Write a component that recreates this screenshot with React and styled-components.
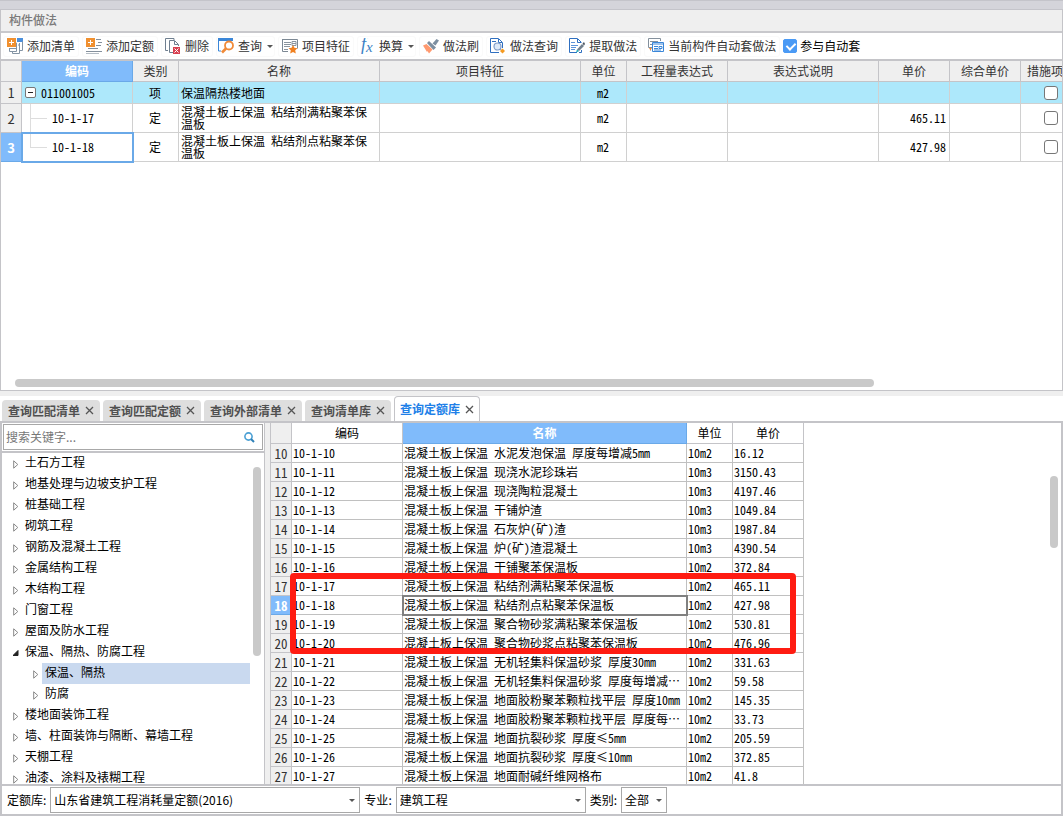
import { useState } from "react";
import styled, { createGlobalStyle, css } from "styled-components";

const GlobalStyle = createGlobalStyle`
  * {
    box-sizing: border-box;
  }

  body {
    margin: 0;
    font-family: "Noto Sans CJK SC", sans-serif;
    font-size: 12px;
    line-height: 16px;
    color: #333;
    background: #fff;
  }

  button,
  input,
  select {
    font: inherit;
    color: inherit;
    margin: 0;
  }
`;

const songti = css`
  font-family: "Noto Sans CJK SC", sans-serif;
  font-feature-settings: "hwid";
  color: #000;
`;

const Page = styled.div`
  display: flex;
  flex-direction: column;
  height: 100vh;
  overflow: hidden;
`;

const Upper = styled.section`
  display: flex;
  flex-direction: column;
  flex: none;
  height: calc(50vh - 27px);
  border: 1px solid #c4c4c8;
  border-top: 0;
`;

const Strip = styled.div`
  flex: none;
  height: 10px;
  background: #d4d4da;
  border: 1px solid #c4c4ca;
  border-width: 1px 0;
`;

const Title = styled.h1`
  flex: none;
  height: 23px;
  margin: 0;
  padding: 2px 8px;
  font-size: 12px;
  line-height: 16px;
  font-weight: 500;
  color: #7a7a7a;
  background: #efefef;
  border-bottom: 2px solid #c8c8cc;
`;

const Toolbar = styled.div`
  display: flex;
  align-items: center;
  flex: none;
  gap: 3px;
  height: 28px;
  padding: 0 2px;
  border-bottom: 2px solid #c4c4c8;
  white-space: nowrap;
`;

const ToolButton = styled.button`
  display: flex;
  align-items: center;
  gap: 4px;
  height: 21px;
  padding: 0 ${(p) => (p.$menu ? 1 : 3)}px;
  border: 1px solid #fafafa;
  border-radius: 3px;
  background: #fff;

  svg {
    flex: none;
  }
`;

const Caret = styled.span`
  width: 5px;
  margin-left: 1px;
  border: solid transparent;
  border-width: 3px 3px 0;
  border-top-color: #555;
`;

const CheckLabel = styled.label`
  display: flex;
  align-items: center;
  gap: 3px;
  color: #000;
`;

const Check = styled.input`
  appearance: none;
  display: block;
  width: 14px;
  height: 14px;
  border: 1px solid #777;
  border-radius: 3px;
  background: #fff;

  &:checked {
    border-color: #4a9af5;
    border-radius: 2px;
    background: #4a9af5;
  }

  &:checked::after {
    content: "";
    display: block;
    width: 4px;
    height: 7px;
    margin: 1px 4px;
    border: solid #fff;
    border-width: 0 2px 2px 0;
    transform: rotate(45deg);
  }
`;

const TopGrid = styled.div`
  flex: 1;
  min-height: 0;
  overflow: hidden;
`;

const Table = styled.table`
  table-layout: fixed;
  width: ${(p) => p.$width}px;
  border-collapse: separate;
  border-spacing: 0;
`;

const Th = styled.th`
  height: 21px;
  padding: 0;
  font-weight: 400;
  background: #efefef;
  border: solid #c4c4c8;
  border-width: 0 1px 1px 0;

  ${(p) =>
    p.$plain &&
    css`
      ${songti}
      background: #fff;
    `}

  ${(p) =>
    p.$active &&
    css`
      font-weight: 700;
      color: #fff;
      background: #80bbfb;
      border-color: #6aa9e8;
    `}
`;

const Td = styled.td`
  ${songti}
  height: ${(p) => p.$height}px;
  padding: 0 3px 0 2px;
  line-height: 12px;
  text-align: ${(p) => p.$align || "left"};
  background: ${(p) => (p.$highlight ? "#ade8fb" : "#fff")};
  border: solid #d0d0d0;
  border-width: 0 1px 1px 0;

  ${(p) =>
    p.$selected &&
    css`
      outline: 2px solid #6aa9e8;
      outline-offset: -1px;
    `}
`;

const NameText = styled.div`
  padding-right: 8px;
`;

const RowHead = styled.th`
  height: ${(p) => p.$height}px;
  padding: 1px 0 0;
  font-size: 13px;
  line-height: 16px;
  font-weight: 400;
  background: #efefef;
  border: solid #c4c4c8;
  border-width: 0 1px 1px 0;
  ${(p) => p.$half && 'font-feature-settings: "hwid";'}

  ${(p) =>
    p.$active &&
    css`
      font-weight: 700;
      color: #fff;
      background: #80bbfb;
      border-color: #6aa9e8;
    `}
`;

const CodeCell = styled.div`
  display: flex;
  align-items: center;
  height: ${(p) => p.$height}px;
`;

const Expander = styled.button`
  width: 11px;
  height: 11px;
  margin: 0 5px 0 1px;
  padding: 0 2px;
  border: 1px solid #777;
  border-radius: 2px;
  background: #fff;

  &::before {
    content: "";
    display: block;
    height: 1px;
    background: #222;
  }
`;

const Branch = styled.span`
  width: 17px;
  height: 100%;
  margin: 0 5px 0 6px;
  background:
    linear-gradient(#ddd, #ddd) 0 0 / 1px ${(p) => (p.$last ? "50%" : "100%")} no-repeat,
    linear-gradient(#ddd, #ddd) 0 50% / 100% 1px no-repeat;
`;

const CenterCheck = styled(Check)`
  margin: 0 auto;
`;

const HScroll = styled.div`
  flex: none;
  width: 81%;
  height: 8px;
  margin: 0 14px 3px;
  border-radius: 4px;
  background: #c9c9c9;
`;

const Splitter = styled.div`
  flex: none;
  height: 5px;
  background: #efefef;
`;

const Tabs = styled.div`
  display: flex;
  align-items: flex-end;
  flex: none;
  gap: 3px;
  height: 25px;
  padding-left: 2px;
`;

const Tab = styled.div`
  display: flex;
  align-items: center;
  gap: 5px;
  height: 21px;
  padding: 0 6px;
  border-radius: 4px 4px 0 0;
  background: #dedede;

  ${(p) =>
    p.$active &&
    css`
      height: 25px;
      padding: 0 5px;
      background: #fff;
      border: 1px solid #c4c4c8;
      border-bottom: 0;
    `}
`;

const TabButton = styled.button`
  padding: 0;
  border: 0;
  background: none;
  font-weight: 700;
  color: ${(p) => (p.$active ? "#2080e8" : "#505050")};
`;

const CloseButton = styled.button`
  display: flex;
  padding: 0;
  border: 0;
  background: none;
`;

const Lower = styled.section`
  display: flex;
  flex: 1;
  min-height: 0;
  border: 2px solid #c4c4c8;
  border-bottom: 0;
`;

const Side = styled.aside`
  display: flex;
  flex-direction: column;
  flex: none;
  width: 263px;
  border-right: 1px solid #c4c4c8;
`;

const SearchRow = styled.div`
  padding: 1px;
  border-bottom: 2px solid #c4c4c8;
`;

const SearchBox = styled.label`
  display: flex;
  align-items: center;
  height: 26px;
  padding: 0 7px 0 2px;
  border: 1px solid #a8a8a8;
`;

const SearchInput = styled.input`
  flex: 1;
  min-width: 0;
  padding: 0;
  border: 0;
  outline: 0;
  background: none;

  &::placeholder {
    color: #777;
  }
`;

const TreeWrap = styled.div`
  display: flex;
  flex: 1;
  min-height: 0;
  overflow: hidden;
`;

const Tree = styled.ul`
  flex: 1;
  margin: 0;
  padding: 0 3px 0 11px;
  list-style: none;
  color: #000;
`;

const TreeItem = styled.li`
  display: flex;
  align-items: center;
  height: 21px;
  padding-left: ${(p) => p.$level * 20}px;

  svg {
    flex: none;
    margin-top: 2px;
  }
`;

const TreeLabel = styled.span`
  flex: 1;
  height: 21px;
  padding-left: 3px;
  line-height: 18px;
  background: ${(p) => (p.$selected ? "#c9d9ef" : "none")};
`;

const VScroll = styled.div`
  flex: none;
  width: 8px;
  height: ${(p) => p.$height}px;
  margin-right: 3px;
  margin-top: ${(p) => p.$top}px;
  border-radius: 4px;
  background: #c9c9c9;
`;

const VSplitter = styled.div`
  flex: none;
  width: 5px;
  background: #efefef;
`;

const Quota = styled.div`
  position: relative;
  display: flex;
  justify-content: space-between;
  align-items: flex-start;
  flex: 1;
  min-width: 0;
  overflow: hidden;
  border-left: 1px solid #c4c4c8;
`;

const QuotaTd = styled(Td)`
  padding: 0 0 0 1px;
  border-color: #c0c0c0;
  white-space: nowrap;
  ${(p) => p.$selected && "outline-color: #808080;"}
`;

const Mark = styled.div`
  position: absolute;
  left: 19px;
  top: 150px;
  width: 506px;
  height: 81px;
  border: 6px solid #ff1c12;
  border-radius: 4px;
  pointer-events: none;
`;

const Footer = styled.footer`
  display: flex;
  align-items: center;
  flex: none;
  gap: 4px;
  height: 32px;
  padding: 0 5px;
  border: 2px solid #c4c4c8;
  color: #000;
`;

const SelectBox = styled.span`
  display: grid;
  align-items: center;
  width: ${(p) => p.$width}px;

  & > * {
    grid-area: 1 / 1;
  }

  & > span {
    justify-self: end;
    margin-right: 5px;
    pointer-events: none;
  }
`;

const Select = styled.select`
  appearance: none;
  width: 100%;
  height: 26px;
  padding: 0 3px;
  border: 1px solid #a8a8a8;
  border-radius: 0;
  background: #fff;
`;

const FxText = styled.text`
  font-family: "Liberation Serif", serif;
  font-style: italic;
  font-size: ${(p) => p.$size}px;
  fill: #3b7fc4;
`;

const Svg = ({ children, size = 16 }) => (
  <svg width={size} height={size} viewBox={`0 0 ${size} ${size}`} fill="none" aria-hidden="true">
    {children}
  </svg>
);

const Plus = () => (
  <>
    <path d="M0 0h9v9H0z" fill="#f09030" />
    <path d="M4.5 2v5M2 4.5h5" stroke="#fff" />
  </>
);

const icons = {
  addList: (
    <Svg>
      <path d="M10 0h6v3h-6z" fill="#4a8fdc" />
      <path d="M15.500 3v9.500h-3M12.500 5v10.500H5.500V13M2.500 10v3.500h7V5H10M3 10.500h6M11 7h1" stroke="#8494a4" />
      <path d="M10 3.500h5.500" stroke="#4a8fdc" />
      <Plus />
    </Svg>
  ),
  addQuota: (
    <Svg>
      <path d="M10 1.500h5M12 4.500h4M10 7.500h5M2 10.500h10M0 13.500h16" stroke="#84909c" />
      <path d="M0 15.500h13" stroke="#b4bcc4" />
      <Plus />
    </Svg>
  ),
  remove: (
    <Svg>
      <path d="M3 12.500H.5V.5H9V2" stroke="#6f7f90" />
      <path d="M8 14.500H4.500v-12h5l4 4V8M9.500 3v3.500H13" stroke="#6f7f90" />
      <path d="M8 9h7v7H8z" fill="#d84050" />
      <path d="M9.500 10.500l4 4m0-4l-4 4" stroke="#fff" />
    </Svg>
  ),
  query: (
    <Svg>
      <path d="M0 0h15v3H0z" fill="#3a86d8" />
      <path d="M.5 2v11H3" stroke="#3a86d8" />
      <circle cx="11" cy="7.500" r="4" fill="#fff" stroke="#f08a38" strokeWidth="1.800" />
      <path d="M8 10.500L4 14.500" stroke="#f08a38" strokeWidth="2.600" />
    </Svg>
  ),
  feature: (
    <Svg>
      <path d="M.5 1.500h15v9M.5 1v12.500H6" stroke="#7c8894" />
      <path d="M2 4.500h7M2 6.500h7M2 8.500h6M2 11.500h4M10 3.500h4v4h-4zM10 5.500h4" stroke="#8a949e" />
      <path d="M11 7l1.400 2.800 3.100.4-2.300 2.100.6 3.200-2.800-1.500-2.800 1.500.6-3.200-2.300-2.100 3.100-.4z" fill="#f08020" />
    </Svg>
  ),
  fx: (
    <Svg>
      <FxText x="2" y="12" $size={18}>f</FxText>
      <FxText x="7" y="14" $size={15}>x</FxText>
    </Svg>
  ),
  brush: (
    <Svg>
      <path d="M9.500 5.500L13.500 1l2.500 1.500-3.500 5z" fill="#7c8ea0" />
      <path d="M6 3l7 6.500-2.500 2.500L4 5z" fill="#7c8ea0" />
      <path d="M0 7.500L3.500 6l6 5.500L6 15.500 4.500 13l-.5 1z" fill="#ff9a70" />
    </Svg>
  ),
  docQuery: (
    <Svg>
      <path d="M9 14.500H.5V.5h8l4 4V10M8.500 1v3.500H12M2 3.500h4" stroke="#2f6fc0" />
      <circle cx="7.500" cy="8.500" r="3.500" fill="#dce9f8" stroke="#7f9cc8" strokeWidth="1.200" />
      <path d="M10 11l1.500 1" stroke="#7f9cc8" />
      <path d="M12.500 10.500l2.500 2.500-2.500 2.500-2.500-2.500z" fill="#f59a20" />
    </Svg>
  ),
  extract: (
    <Svg>
      <path d="M8 14.500H.5V.5h8l4 4M8.500 1v3.500H12M12.500 12v2.500H10" stroke="#2f6fc0" />
      <path d="M2 4.500h4M2 7.500h7M2 9.500h5M2 11.500h4" stroke="#5b92d8" />
      <path d="M8 11.500l5-5.500L15 8l-5 5z" fill="#72808e" />
      <path d="M13.500 5.500L15 4l1 2-1 1.500z" fill="#49535f" />
      <path d="M7 14.500l1-3 2 1.800z" fill="#18a8b8" />
    </Svg>
  ),
  auto: (
    <Svg>
      <path d="M.5 9.500v-9h12V3M.5 9.500H4M2 3.500h8M2 6.500h2M2.500 10v2.500" stroke="#84909c" />
      <path d="M1 10h3l-1.500 2.500z" fill="#f08a38" />
      <path d="M4.500 4.500h11v9h-11zM5 6h10" stroke="#3a86d8" fill="#fff" />
      <path d="M6 8.500h4M6 10.500h4M6 12h7M11 8.500h3v2h-3z" stroke="#3a86d8" />
    </Svg>
  ),
  search: (
    <Svg size={11}>
      <circle cx="4.500" cy="4.500" r="3.600" stroke="#4a9fd4" strokeWidth="1.600" />
      <path d="M7 7l3 3" stroke="#2f80b8" strokeWidth="2" />
    </Svg>
  ),
  close: (
    <Svg size={9}>
      <path d="M1 1l7 7m0-7l-7 7" stroke="#555" strokeWidth="1.300" />
    </Svg>
  ),
  closed: (
    <Svg size={9}>
      <path d="M.7 .8v7.400L4.800 4.500z" stroke="#888" />
    </Svg>
  ),
  open: (
    <Svg size={9}>
      <path d="M5 1.500V6.500H0z" fill="#222" stroke="#222" />
    </Svg>
  ),
};

const tools = [
  { icon: "addList", text: "添加清单" },
  { icon: "addQuota", text: "添加定额" },
  { icon: "remove", text: "删除" },
  { icon: "query", text: "查询", menu: true },
  { icon: "feature", text: "项目特征" },
  { icon: "fx", text: "换算", menu: true },
  { icon: "brush", text: "做法刷" },
  { icon: "docQuery", text: "做法查询" },
  { icon: "extract", text: "提取做法" },
  { icon: "auto", text: "当前构件自动套做法" },
];

const topColumns = [
  ["", 21],
  ["编码", 111],
  ["类别", 46],
  ["名称", 201],
  ["项目特征", 201],
  ["单位", 46],
  ["工程量表达式", 101],
  ["表达式说明", 151],
  ["单价", 71],
  ["综合单价", 71],
  ["措施项目", 61],
];

const topRows = [
  { code: "011001005", kind: "项", name: "保温隔热楼地面", unit: "m2", price: "" },
  { code: "10-1-17", kind: "定", name: "混凝土板上保温 粘结剂满粘聚苯保温板", unit: "m2", price: "465.11" },
  { code: "10-1-18", kind: "定", name: "混凝土板上保温 粘结剂点粘聚苯保温板", unit: "m2", price: "427.98" },
];

const tabs = ["查询匹配清单", "查询匹配定额", "查询外部清单", "查询清单库", "查询定额库"];

const tree = [
  { text: "土石方工程" },
  { text: "地基处理与边坡支护工程" },
  { text: "桩基础工程" },
  { text: "砌筑工程" },
  { text: "钢筋及混凝土工程" },
  { text: "金属结构工程" },
  { text: "木结构工程" },
  { text: "门窗工程" },
  { text: "屋面及防水工程" },
  { text: "保温、隔热、防腐工程", open: true },
  { text: "保温、隔热", level: 1 },
  { text: "防腐", level: 1 },
  { text: "楼地面装饰工程" },
  { text: "墙、柱面装饰与隔断、幕墙工程" },
  { text: "天棚工程" },
  { text: "油漆、涂料及裱糊工程" },
];

const quotaColumns = [
  ["", 21],
  ["编码", 111],
  ["名称", 284],
  ["单位", 46],
  ["单价", 71],
];

const quotas = [
  [10, "水泥发泡保温 厚度每增减5mm", "10m2", "16.12"],
  [11, "现浇水泥珍珠岩", "10m3", "3150.43"],
  [12, "现浇陶粒混凝土", "10m3", "4197.46"],
  [13, "干铺炉渣", "10m3", "1049.84"],
  [14, "石灰炉(矿)渣", "10m3", "1987.84"],
  [15, "炉(矿)渣混凝土", "10m3", "4390.54"],
  [16, "干铺聚苯保温板", "10m2", "372.84"],
  [17, "粘结剂满粘聚苯保温板", "10m2", "465.11"],
  [18, "粘结剂点粘聚苯保温板", "10m2", "427.98"],
  [19, "聚合物砂浆满粘聚苯保温板", "10m2", "530.81"],
  [20, "聚合物砂浆点粘聚苯保温板", "10m2", "476.96"],
  [21, "无机轻集料保温砂浆 厚度30mm", "10m2", "331.63"],
  [22, "无机轻集料保温砂浆 厚度每增减…", "10m2", "59.58"],
  [23, "地面胶粉聚苯颗粒找平层 厚度10mm", "10m2", "145.35"],
  [24, "地面胶粉聚苯颗粒找平层 厚度每…", "10m2", "33.73"],
  [25, "地面抗裂砂浆 厚度≤5mm", "10m2", "205.59"],
  [26, "地面抗裂砂浆 厚度≤10mm", "10m2", "372.85"],
  [27, "地面耐碱纤维网格布", "10m2", "41.8"],
];

const sum = (columns) => columns.reduce((total, [, width]) => total + width, 0);

function Columns({ columns }) {
  return (
    <colgroup>
      {columns.map(([name, width]) => (
        <col key={name} width={width} />
      ))}
    </colgroup>
  );
}

function MethodTable() {
  return (
    <Table $width={sum(topColumns)}>
      <Columns columns={topColumns} />
      <thead>
        <tr>
          {topColumns.map(([name]) => (
            <Th key={name} $active={name === "编码"}>
              {name}
            </Th>
          ))}
        </tr>
      </thead>
      <tbody>
        {topRows.map((row, i) => {
          const cell = { $height: i ? 29 : 22, $highlight: i === 0 };
          return (
            <tr key={row.code}>
              <RowHead $height={cell.$height} $active={i === 2}>
                {i + 1}
              </RowHead>
              <Td {...cell} $selected={i === 2}>
                <CodeCell $height={cell.$height - 1}>
                  {i === 0 ? <Expander aria-label="折叠" /> : <Branch $last={i === 2} />}
                  {row.code}
                </CodeCell>
              </Td>
              <Td {...cell} $align="center">{row.kind}</Td>
              <Td {...cell}>
                <NameText>{row.name}</NameText>
              </Td>
              <Td {...cell} />
              <Td {...cell} $align="center">{row.unit}</Td>
              <Td {...cell} />
              <Td {...cell} />
              <Td {...cell} $align="right">{row.price}</Td>
              <Td {...cell} />
              <Td {...cell}>
                <CenterCheck type="checkbox" aria-label={`措施项目 ${row.code}`} />
              </Td>
            </tr>
          );
        })}
      </tbody>
    </Table>
  );
}

function QuotaTable() {
  return (
    <Table $width={sum(quotaColumns)}>
      <Columns columns={quotaColumns} />
      <thead>
        <tr>
          {quotaColumns.map(([name]) => (
            <Th key={name} $plain={name !== ""} $active={name === "名称"}>
              {name}
            </Th>
          ))}
        </tr>
      </thead>
      <tbody>
        {quotas.map(([no, name, unit, price]) => (
          <tr key={no}>
            <RowHead $height={19} $half $active={no === 18}>
              {no}
            </RowHead>
            <QuotaTd $height={19}>10-1-{no}</QuotaTd>
            <QuotaTd $height={19} $selected={no === 18}>
              混凝土板上保温 {name}
            </QuotaTd>
            <QuotaTd $height={19}>{unit}</QuotaTd>
            <QuotaTd $height={19}>{price}</QuotaTd>
          </tr>
        ))}
      </tbody>
    </Table>
  );
}

function Dropdown({ id, label, width, value }) {
  return (
    <>
      <label htmlFor={id}>{label}:</label>
      <SelectBox $width={width}>
        <Select id={id}>
          <option>{value}</option>
        </Select>
        <Caret />
      </SelectBox>
    </>
  );
}

function App() {
  const [tab, setTab] = useState("查询定额库");
  const [node, setNode] = useState("保温、隔热");

  return (
    <Page lang="zh-CN">
      <GlobalStyle />
      <Strip />
      <Upper>
        <Title>构件做法</Title>
        <Toolbar>
          {tools.map(({ icon, text, menu }) => (
            <ToolButton key={icon} $menu={menu}>
              {icons[icon]}
              {text}
              {menu && <Caret />}
            </ToolButton>
          ))}
          <CheckLabel>
            <Check type="checkbox" defaultChecked />
            参与自动套
          </CheckLabel>
        </Toolbar>
        <TopGrid>
          <MethodTable />
        </TopGrid>
        <HScroll />
      </Upper>
      <Splitter />
      <Tabs>
        {tabs.map((name) => (
          <Tab key={name} $active={name === tab}>
            <TabButton $active={name === tab} onClick={() => setTab(name)}>
              {name}
            </TabButton>
            <CloseButton aria-label={`关闭${name}`}>{icons.close}</CloseButton>
          </Tab>
        ))}
      </Tabs>
      <Lower>
        <Side>
          <SearchRow>
            <SearchBox>
              <SearchInput placeholder="搜索关键字..." aria-label="搜索关键字" />
              {icons.search}
            </SearchBox>
          </SearchRow>
          <TreeWrap>
            <Tree>
              {tree.map(({ text, level = 0, open }) => (
                <TreeItem key={text} $level={level} onClick={() => setNode(text)}>
                  {open ? icons.open : icons.closed}
                  <TreeLabel $selected={text === node}>{text}</TreeLabel>
                </TreeItem>
              ))}
            </Tree>
            <VScroll $height={189} $top={14} />
          </TreeWrap>
        </Side>
        <VSplitter />
        <Quota>
          <QuotaTable />
          <VScroll $height={72} $top={53} />
          <Mark />
        </Quota>
      </Lower>
      <Footer>
        <Dropdown id="library" label="定额库" width={310} value="山东省建筑工程消耗量定额(2016)" />
        <Dropdown id="major" label="专业" width={190} value="建筑工程" />
        <Dropdown id="kind" label="类别" width={46} value="全部" />
      </Footer>
    </Page>
  );
}

export default App;
